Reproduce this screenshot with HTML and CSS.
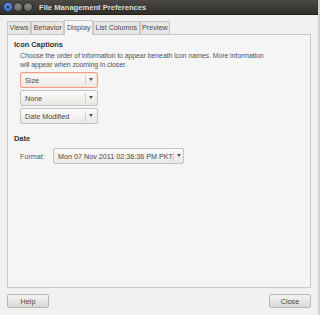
FILE: index.html
```html
<!DOCTYPE html>
<html lang="en">
<head>
  <meta charset="UTF-8">
  <title>File Management Preferences</title>
  <link rel="stylesheet" href="styles.css">
</head>
<body>
  <div class="window">
    <!-- Barra de título -->
    <div class="titlebar">
      <div class="controls">
        <span class="ctl close-ctl">
          <svg width="8" height="8" viewBox="0 0 8 8"><path d="M2.3 2.3 L5.7 5.7 M5.7 2.3 L2.3 5.7" stroke="#1f3566" stroke-width="1.2"/></svg>
        </span>
        <span class="ctl"></span>
        <span class="ctl"></span>
      </div>
      <div class="title">File Management Preferences</div>
    </div>

    <div class="body">
      <!-- Abas -->
      <div class="tabs">
        <div class="tab">Views</div>
        <div class="tab">Behavior</div>
        <div class="tab active">Display</div>
        <div class="tab">List Columns</div>
        <div class="tab">Preview</div>
      </div>

      <div class="panel">
        <h3>Icon Captions</h3>
        <p class="desc">Choose the order of information to appear beneath icon names. More information<br>will appear when zooming in closer.</p>
        <div class="combos">
          <div class="combo focus"><span class="label">Size</span><span class="arrow"></span></div>
          <div class="combo"><span class="label">None</span><span class="arrow"></span></div>
          <div class="combo"><span class="label">Date Modified</span><span class="arrow"></span></div>
        </div>

        <h3 class="date-title">Date</h3>
        <div class="format-row">
          <span class="format-label">Format:</span>
          <div class="combo wide"><span class="label">Mon 07 Nov 2011 02:36:36 PM PKT</span><span class="arrow"></span></div>
        </div>
      </div>

      <div class="buttons">
        <button class="btn">Help</button>
        <button class="btn">Close</button>
      </div>
    </div>
  </div>
</body>
</html>
```

FILE: styles.css
```css
/* Reset básico */
* {
  margin: 0;
  padding: 0;
  box-sizing: border-box;
}
html, body {
  width: 320px;
  height: 315px;
  overflow: hidden;
}
body {
  font-family: 'Liberation Sans', sans-serif;
  font-size: 7.2px;
  color: #3c3c3c;
  background: #f2f1f0;
}
.window {
  width: 320px;
  height: 315px;
  display: flex;
  flex-direction: column;
  border-right: 2px solid #d3d2cf;
}
/* Barra de título */
.titlebar {
  height: 15px;
  background: linear-gradient(#4a4944, #3a3935 60%, #2f2e2a);
  display: flex;
  align-items: center;
  padding-left: 3px;
  border-bottom: 1px solid #1f1e1b;
}
.controls {
  display: flex;
  gap: 0;
}
.ctl {
  width: 10px;
  height: 10px;
  border-radius: 50%;
  background: radial-gradient(circle at 50% 35%, #8a8984, #5a5955);
  border: 1px solid #2c2b28;
  display: flex;
  align-items: center;
  justify-content: center;
}
.close-ctl {
  background: radial-gradient(circle at 50% 35%, #7aa6f0, #2f64c8);
  border-color: #1c3c7a;
}
.title {
  margin-left: 6px;
  color: #dfdbd2;
  font-weight: bold;
  font-size: 7.6px;
}
/* Corpo */
.body {
  flex: 1;
  display: flex;
  flex-direction: column;
  padding: 5px 7px 7px 7px;
}
.tabs {
  display: flex;
  align-items: flex-end;
  height: 14px;
}
.tab {
  height: 13px;
  padding: 0 1.5px;
  line-height: 12px;
  border: 1px solid #c9c8c4;
  border-bottom: none;
  background: #e8e7e4;
  color: #4a4a4a;
  margin-right: 0;
}
.tab.active {
  height: 15px;
  background: #f5f5f5;
  margin-bottom: -1px;
  position: relative;
  z-index: 1;
  line-height: 13px;
}
.panel {
  flex: 1;
  background: #f5f5f5;
  border: 1px solid #c9c8c4;
  padding: 5px 6px;
}
h3 {
  font-size: 7.4px;
  font-weight: bold;
  color: #333;
  line-height: 10px;
}
.desc {
  margin: 1px 0 0 6px;
  line-height: 9px;
  color: #555;
  font-size: 7px;
  letter-spacing: -0.1px;
  white-space: nowrap;
}
.combos {
  margin: 3px 0 0 6px;
  display: flex;
  flex-direction: column;
  gap: 2px;
}
.combo {
  width: 78px;
  height: 16px;
  display: flex;
  align-items: center;
  border: 1px solid #c4c3bf;
  border-radius: 2px;
  background: linear-gradient(#fbfbfa, #e9e8e5);
  color: #4a4a4a;
}
.combo.focus {
  border-color: #eba08b;
  box-shadow: 0 0 0 1px #f8e0d6 inset;
}
.combo .label {
  flex: 1;
  padding-left: 4px;
  white-space: nowrap;
}
.combo .arrow {
  width: 12px;
  height: 10px;
  border-left: 1px solid #d0cfcb;
  position: relative;
}
.combo .arrow::after {
  content: '';
  position: absolute;
  left: 3px;
  top: 3px;
  border-left: 2.5px solid transparent;
  border-right: 2.5px solid transparent;
  border-top: 3px solid #555;
}
.date-title {
  margin-top: 10px;
}
.format-row {
  display: flex;
  align-items: center;
  margin: 4px 0 0 6px;
}
.format-label {
  width: 33px;
  color: #555;
}
.combo.wide {
  width: 131px;
}
.buttons {
  display: flex;
  justify-content: space-between;
  margin-top: 6px;
}
.btn {
  width: 42px;
  height: 14px;
  font-family: 'Liberation Sans', sans-serif;
  font-size: 7.2px;
  color: #4a4a4a;
  border: 1px solid #b9b8b4;
  border-radius: 2px;
  background: linear-gradient(#f4f4f2, #d9d8d5);
}
```
